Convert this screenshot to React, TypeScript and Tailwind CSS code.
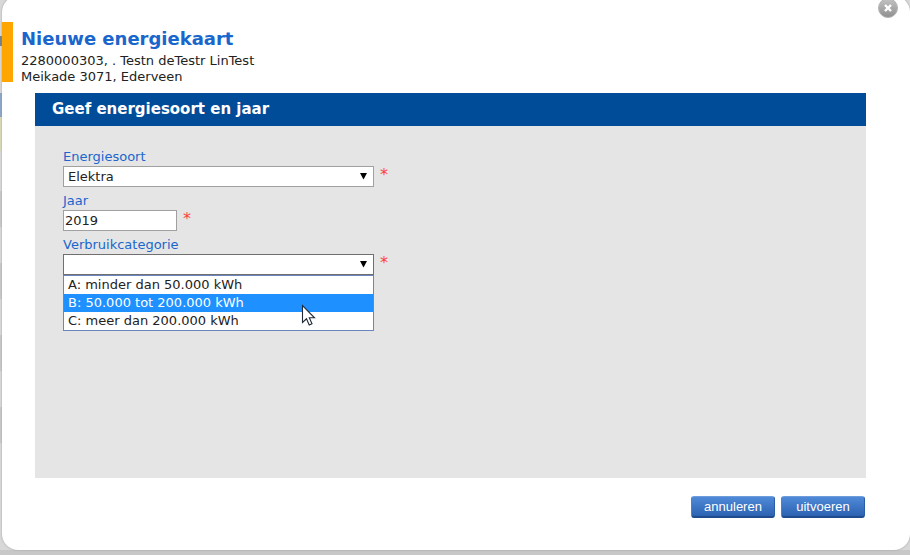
import { useState } from 'react'

const categories = [
  { value: 'A', label: 'A: minder dan 50.000 kWh' },
  { value: 'B', label: 'B: 50.000 tot 200.000 kWh' },
  { value: 'C', label: 'C: meer dan 200.000 kWh' },
]

function Arrow() {
  return (
    <svg className="pointer-events-none absolute top-1.5 right-[7px] h-2 w-[7px]" viewBox="0 0 7 8" aria-hidden="true">
      <path d="M0 1h7L3.5 7.5z" fill="#000" />
    </svg>
  )
}

function Required() {
  return <span className="pl-1.5 text-[16px] leading-[18px] text-[#ff4040]">*</span>
}

function Cursor() {
  return (
    <svg className="pointer-events-none absolute top-7 left-[237px] h-6 w-4" viewBox="0 0 16 24" aria-hidden="true">
      <path
        d="M1.5 1.5v17l4-3.7 2.7 6.2 2.8-1.2-2.7-6h5.2z"
        fill="#fff"
        stroke="#222a38"
        strokeWidth="1.1"
      />
    </svg>
  )
}

// The part of the page that stays visible beside the dialog
function PageEdge() {
  return (
    <div className="flex w-0.5 shrink-0 flex-col bg-[#d8d8d8]">
      <div className="h-9" />
      <div className="h-2.5 bg-[#6d7f91]" />
      <div className="h-[47px]" />
      <div className="h-6 bg-[#8ba4c8]" />
      <div className="h-[34px] bg-[#d8dbb4]" />
      <div className="h-10" />
      <div className="h-9 bg-[#c9c9c9]" />
      <div className="h-9" />
      <div className="h-9 bg-[#c9c9c9]" />
      <div className="h-9" />
      <div className="h-9 bg-[#c9c9c9]" />
      <div className="h-9" />
      <div className="h-9 bg-[#c9c9c9]" />
    </div>
  )
}

const buttonClass =
  'h-[22px] w-[84px] rounded-[3px] border border-t-[#6f9ddb] border-r-[#2a5ca8] border-b-2 border-b-[#1f4a8c] border-l-[#4b80cb] bg-linear-to-b from-[#4f8ad8] to-[#2c62b2] font-["Liberation_Sans",Arial,sans-serif] text-[13px] leading-[18px] text-white'

export default function App() {
  const [energy, setEnergy] = useState('Elektra')
  const [year, setYear] = useState('2019')
  const [category, setCategory] = useState('')
  const [active, setActive] = useState('B')
  const [open, setOpen] = useState(true)

  const pick = (value: string) => {
    setCategory(value)
    setOpen(false)
  }

  return (
    <div className='flex min-h-screen flex-col overflow-hidden bg-[#d8d8d8] font-[Verdana,"DejaVu_Sans",sans-serif] text-[13px] text-[#222]'>
      <div className="flex flex-1">
        <PageEdge />
        <main className="relative -mt-1 flex flex-1 flex-col rounded-[16px] bg-white pt-[26px] pb-8 shadow-[0_0_2px_#999]">
          <button type="button" aria-label="Sluiten" className="absolute top-0.5 right-3 h-5 w-5">
            <svg viewBox="0 0 20 20" className="h-5 w-5" aria-hidden="true">
              <defs>
                <linearGradient id="close" x1="0" y1="0" x2="0" y2="1">
                  <stop offset="0" stopColor="#c4c4c4" />
                  <stop offset="1" stopColor="#8f8f8f" />
                </linearGradient>
              </defs>
              <circle cx="10" cy="10" r="9.5" fill="url(#close)" stroke="#b4b4b4" />
              <path d="M7 7l6 6M13 7l-6 6" stroke="#fff" strokeWidth="2.4" />
            </svg>
          </button>

          <header className="flex">
            <div className="h-15 w-[11px] bg-[#ffa500]" />
            <div className="pt-[3px] pl-2">
              <h1 className="text-[18px] leading-7 font-bold text-[#1a66cc]">Nieuwe energiekaart</h1>
              <p className="leading-4">2280000303, . Testn deTestr LinTest</p>
              <p className="leading-4">Meikade 3071, Ederveen</p>
            </div>
          </header>

          <section className="mt-2 mr-11 ml-[33px] flex flex-1 flex-col bg-[#e5e5e5]">
            <h2 className="bg-[#004c99] pb-px pl-[17px] text-[15px] leading-8 font-bold text-white">
              Geef energiesoort en jaar
            </h2>
            <form className="flex flex-col gap-[5px] pt-[22px] pl-7">
              <div>
                <label htmlFor="energy" className="block leading-[18px] text-[#1a66cc]">Energiesoort</label>
                <div className="flex">
                  <div className="relative w-[311px]">
                    <select
                      id="energy"
                      value={energy}
                      onChange={(e) => setEnergy(e.target.value)}
                      className="block h-[21px] w-full appearance-none border border-[#a0a0a0] bg-white pl-1"
                    >
                      <option>Elektra</option>
                      <option>Gas</option>
                    </select>
                    <Arrow />
                  </div>
                  <Required />
                </div>
              </div>
              <div>
                <label htmlFor="year" className="block leading-[18px] text-[#1a66cc]">Jaar</label>
                <div className="flex">
                  <input
                    id="year"
                    value={year}
                    onChange={(e) => setYear(e.target.value)}
                    className="block h-[21px] w-[114px] border border-[#a0a0a0] bg-white pl-px"
                  />
                  <Required />
                </div>
              </div>
              <div>
                <label htmlFor="category" className="block leading-[18px] text-[#1a66cc]">Verbruikcategorie</label>
                <div className="flex">
                  <div className="relative w-[311px]">
                    <select
                      id="category"
                      value={category}
                      onChange={(e) => setCategory(e.target.value)}
                      className="block h-[21px] w-full appearance-none border border-[#707070] bg-white pl-1"
                    >
                      <option value=""></option>
                      {categories.map((c) => (
                        <option key={c.value} value={c.value}>{c.label}</option>
                      ))}
                    </select>
                    <Arrow />
                    {open && (
                      <div role="listbox" aria-label="Verbruikcategorie" className="absolute top-full left-0 w-full border border-[#6a86c0] bg-white">
                        {categories.map((c) => (
                          <button
                            key={c.value}
                            type="button"
                            role="option"
                            aria-selected={active === c.value}
                            onMouseEnter={() => setActive(c.value)}
                            onClick={() => pick(c.value)}
                            className={`block w-full pl-1 text-left leading-[18px] ${
                              active === c.value ? 'bg-[#1e90ff] text-white' : 'bg-white'
                            }`}
                          >
                            {c.label}
                          </button>
                        ))}
                        <Cursor />
                      </div>
                    )}
                  </div>
                  <Required />
                </div>
              </div>
            </form>
          </section>

          <footer className="mt-[18px] mr-[45px] flex justify-end gap-1.5">
            <button type="button" className={buttonClass}>annuleren</button>
            <button type="button" className={buttonClass}>uitvoeren</button>
          </footer>
        </main>
      </div>
      <div className="h-[5px] bg-[#c8c8c8]" />
    </div>
  )
}
